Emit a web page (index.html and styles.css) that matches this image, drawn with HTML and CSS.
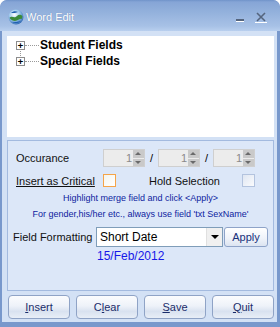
FILE: index.html
```html
<!DOCTYPE html>
<html>
<head>
<meta charset="utf-8">
<link rel="stylesheet" href="styles.css">
</head>
<body>
<div class="window">
  <div class="titlebar">
    <svg class="appicon" width="16" height="16" viewBox="0 0 16 16">
      <defs>
        <radialGradient id="g1" cx="0.4" cy="0.35" r="0.7">
          <stop offset="0" stop-color="#ffffff"/>
          <stop offset="0.5" stop-color="#9cc8ec"/>
          <stop offset="1" stop-color="#2a64b0"/>
        </radialGradient>
      </defs>
      <circle cx="8" cy="8" r="7.5" fill="url(#g1)"/>
      <path d="M1.5 9 C4 6 6 10 9 7 C11 5 13 6 14.5 7 L14 10 C12 9 10 12 7 12 C5 12 3 11 1.5 9 Z" fill="#3c8a3a"/>
      <path d="M3 4 C5 2 8 2 10 3 C8 4 6 4 3 4 Z" fill="#1f5fb0"/>
      <path d="M4 13 C7 15 11 14 13 12 C10 13 7 13 4 13 Z" fill="#1f5fb0"/>
    </svg>
    <span class="title">Word Edit</span>
    <span class="tb-min"></span>
    <svg class="tb-close" width="12" height="11" viewBox="0 0 12 11">
      <path d="M2 1 L10 9 M10 1 L2 9" stroke="#55657e" stroke-width="1.6"/>
      <path d="M0 10.5 L12 10.5" stroke="#ffffff" stroke-width="1"/>
    </svg>
  </div>
  <div class="client">
    <div class="tree">
      <div class="vline"></div>
      <div class="node">
        <span class="exp">+</span><span class="hdots"></span><span class="nlabel">Student Fields</span>
      </div>
      <div class="node">
        <span class="exp">+</span><span class="hdots"></span><span class="nlabel">Special Fields</span>
      </div>
    </div>
    <div class="panel">
      <div class="row r1">
        <span class="lbl">Occurance</span>
        <div class="spin"><span class="val">1</span><span class="spbtn"><span class="up"></span><span class="dn"></span></span></div>
        <span class="slash">/</span>
        <div class="spin"><span class="val">1</span><span class="spbtn"><span class="up"></span><span class="dn"></span></span></div>
        <span class="slash">/</span>
        <div class="spin"><span class="val">1</span><span class="spbtn"><span class="up"></span><span class="dn"></span></span></div>
      </div>
      <div class="row r2">
        <span class="lbl"><u>Insert as Critical</u></span>
        <span class="chk orange"></span>
        <span class="hold">Hold Selection</span>
        <span class="chk blue"></span>
      </div>
      <div class="hint">Highlight merge field and click &lt;Apply&gt;</div>
      <div class="hint">For gender,his/her etc., always use field 'txt SexName'</div>
      <div class="row r3">
        <span class="lbl big">Field Formatting</span>
        <div class="combo"><span class="ctext">Short Date</span><span class="cbtn"><span class="tri"></span></span></div>
        <span class="apply">Apply</span>
      </div>
      <div class="date">15/Feb/2012</div>
    </div>
    <div class="buttons">
      <span class="btn"><u>I</u>nsert</span>
      <span class="btn">C<u>l</u>ear</span>
      <span class="btn"><u>S</u>ave</span>
      <span class="btn"><u>Q</u>uit</span>
    </div>
  </div>
</div>
</body>
</html>
```

FILE: styles.css
```css
* { box-sizing: border-box; }
html, body { margin: 0; padding: 0; background: #ffffff; }
body { font-family: "Liberation Sans", Arial, sans-serif; }

.window {
  width: 280px;
  height: 327px;
  background: #7898cc;
  border-radius: 7px 7px 0 0;
  padding: 0 3px 5px 2px;
  display: flex;
  flex-direction: column;
  overflow: hidden;
}

.titlebar {
  height: 31px;
  margin: 0 -3px 0 -2px;
  padding: 0 0 0 8px;
  background: linear-gradient(#7093c9 0, #86a5d6 2px, #93b1dc 12px, #a7c1e6 26px, #b8cfee 31px);
  border-radius: 7px 7px 0 0;
  display: flex;
  align-items: center;
  position: relative;
}
.appicon { margin-top: 2px; }
.title {
  color: #ffffff;
  font-size: 11px;
  margin-left: 2px;
  margin-top: 2px;
  text-shadow: 0 0 1px #5d7db0;
}
.tb-min {
  position: absolute;
  left: 236px;
  top: 19px;
  width: 8px;
  height: 3px;
  border-top: 2px solid #55657e;
  border-bottom: 1px solid #ffffff;
}
.tb-close {
  position: absolute;
  left: 255px;
  top: 12px;
}

.client {
  flex: 1;
  background: #d3e1f5;
  padding: 5px 3px 0 5px;
  display: flex;
  flex-direction: column;
}

.tree {
  height: 101px;
  background: #ffffff;
  position: relative;
  padding-top: 1px;
}
.vline {
  position: absolute;
  left: 13px;
  top: 13px;
  height: 7px;
  border-left: 1px dotted #9a9a9a;
}
.node {
  height: 16px;
  display: flex;
  align-items: center;
  padding-left: 9px;
}
.exp {
  width: 9px;
  height: 9px;
  border: 1px solid #8c8c8c;
  background: #ffffff;
  font-size: 9px;
  line-height: 7px;
  text-align: center;
  font-weight: bold;
  color: #000;
  font-family: "DejaVu Sans Mono", monospace;
}
.hdots {
  width: 14px;
  border-top: 1px dotted #9a9a9a;
  margin: 0 1px 0 0;
}
.nlabel {
  font-weight: bold;
  font-size: 12px;
  color: #000;
}

.panel {
  margin-top: 3px;
  height: 151px;
  border: 1px solid #a3badf;
  background: #dce7f8;
  padding: 8px 0 0 8px;
  display: flex;
  flex-direction: column;
}
.row {
  display: flex;
  align-items: center;
}
.lbl {
  width: 87px;
  font-size: 11px;
  color: #111;
  white-space: nowrap;
}
.r1 { height: 18px; }
.spin {
  width: 42px;
  height: 18px;
  border: 1px solid #cfcfcf;
  background: #ececec;
  display: flex;
}
.val {
  flex: 1;
  text-align: right;
  font-size: 11px;
  color: #8a8a8a;
  line-height: 16px;
  padding-right: 1px;
}
.spbtn {
  width: 11px;
  display: flex;
  flex-direction: column;
  gap: 1px;
  background: #ececec;
}
.spbtn .up, .spbtn .dn {
  flex: 1;
  background: #c9c9c9;
  position: relative;
}
.spbtn .up::after, .spbtn .dn::after {
  content: "";
  position: absolute;
  left: 2px;
  width: 0;
  height: 0;
  border-left: 3.5px solid transparent;
  border-right: 3.5px solid transparent;
}
.spbtn .up::after { top: 2px; border-bottom: 3px solid #6a6a6a; }
.spbtn .dn::after { top: 2px; border-top: 3px solid #6a6a6a; }
.slash {
  width: 13px;
  text-align: center;
  font-size: 11px;
  color: #000;
}

.r2 { height: 19px; margin-top: 4px; }
.chk {
  width: 13px;
  height: 13px;
  background: linear-gradient(135deg, #f4f4ee, #ffffff);
}
.chk.orange { border: 1px solid #f5a448; }
.chk.blue { border: 1px solid #b3c3de; background: linear-gradient(135deg, #dfe6f2, #fafbfd); }
.hold {
  font-size: 11px;
  color: #111;
  margin-left: 33px;
  width: 93px;
}

.hint {
  height: 16px;
  line-height: 16px;
  font-size: 9px;
  color: #0e1ca0;
  text-align: center;
  margin-left: -8px;
}

.r3 { height: 20px; margin-top: 5px; }
.lbl.big { font-size: 11px; width: 83px; margin-left: -3px; }
.combo {
  width: 127px;
  height: 20px;
  border: 1px solid #7f9db9;
  background: #ffffff;
  display: flex;
  align-items: center;
}
.ctext {
  flex: 1;
  font-size: 12px;
  padding-left: 3px;
  color: #000;
}
.cbtn {
  width: 16px;
  height: 18px;
  background: #f0f0f0;
  border-left: 1px solid #e0e0e0;
  position: relative;
}
.tri {
  position: absolute;
  left: 4px;
  top: 7px;
  border-left: 4px solid transparent;
  border-right: 4px solid transparent;
  border-top: 4px solid #000;
}
.apply {
  margin-left: 1px;
  width: 44px;
  height: 20px;
  border: 1px solid #8ea3c8;
  border-radius: 3px;
  background: linear-gradient(#ffffff, #eef2f9 60%, #dce4f1);
  font-size: 11px;
  color: #17307a;
  text-align: center;
  line-height: 18px;
}

.date {
  margin-top: 1px;
  margin-left: 81px;
  height: 16px;
  line-height: 16px;
  font-size: 12px;
  color: #1717e8;
}

.buttons {
  margin-top: 4px;
  height: 24px;
  display: flex;
  justify-content: space-between;
  padding: 0 0 0 1px;
}
.btn {
  width: 62px;
  height: 24px;
  border: 1px solid #8fa3c6;
  border-radius: 4px;
  background: linear-gradient(#fbfcfe 0, #eef2f9 45%, #d9e2f0 70%, #e8eef7 100%);
  font-size: 11px;
  color: #1a2c6a;
  text-align: center;
  line-height: 22px;
}
```
